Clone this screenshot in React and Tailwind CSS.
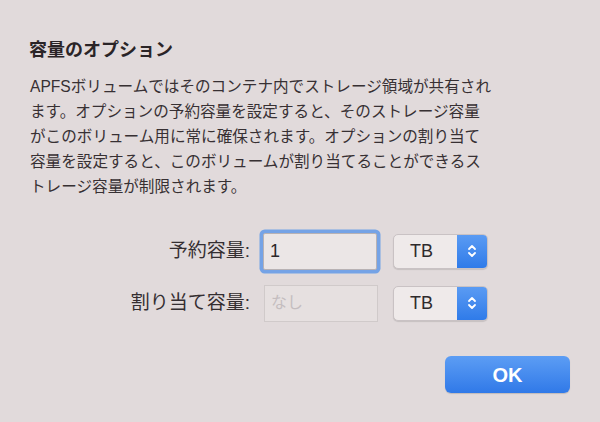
const Chevrons = () => (
    <svg width="10" height="16" viewBox="0 0 10 16" fill="none" stroke="white" strokeWidth="1.8" strokeLinecap="round" strokeLinejoin="round">
        <path d="M2 6 L5 3 L8 6" />
        <path d="M2 10 L5 13 L8 10" />
    </svg>
);

const UnitPopup = ({ value }) => (
    <div className="flex h-[35px] w-[95px] overflow-hidden rounded-[5px] border border-[#c9c2c4] bg-[#efeaea] shadow-[0_1px_1px_rgba(0,0,0,0.12)]">
        <div className="flex flex-1 items-center pl-[16px] text-[18px] text-[#2e2a2c]">{value}</div>
        <div className="flex w-[30px] items-center justify-center bg-gradient-to-b from-[#5a9bf3] to-[#2f7be9]">
            <Chevrons />
        </div>
    </div>
);

const lines = [
    "APFSボリュームではそのコンテナ内でストレージ領域が共有され",
    "ます。オプションの予約容量を設定すると、そのストレージ容量",
    "がこのボリューム用に常に確保されます。オプションの割り当て",
    "容量を設定すると、このボリュームが割り当てることができるス",
    "トレージ容量が制限されます。",
];

export default function App() {
    return (
        <div
            className="flex h-[422px] w-[600px] flex-col bg-[#e1dadb] pt-[37px]"
            style={{ fontFamily: '"Liberation Sans", "Noto Sans CJK JP", sans-serif' }}
        >
            <h1 className="pl-[29px] text-[18px] font-bold leading-[26px] text-[#2a2427]">
                容量のオプション
            </h1>
            <div className="mt-[11px] pl-[30px] text-[15.6px] leading-[25px] text-[#373033]">
                {lines.map((l, i) => (
                    <div key={i} className="whitespace-nowrap">{l}</div>
                ))}
            </div>

            <div className="mt-[29px] flex h-[46px] items-center">
                <div className="w-[250px] text-right text-[19px] text-[#342e31]">予約容量:</div>
                <div className="ml-[13px] flex h-[37px] w-[114px] items-center rounded-[2px] border border-[#b8b2b4] bg-[#ebe6e6] pl-[6px] text-[18px] text-[#2b2629] shadow-[0_0_0_3.5px_#75a3e6]">
                    1
                </div>
                <div className="ml-[16px]">
                    <UnitPopup value="TB" />
                </div>
            </div>

            <div className="mt-[6px] flex h-[46px] items-center">
                <div className="w-[250px] text-right text-[19px] text-[#342e31]">割り当て容量:</div>
                <div className="ml-[14px] flex h-[37px] w-[114px] items-center border border-[#d0caca] bg-[#e6e0e0] pl-[6px] text-[16px] text-[#c4bdbf]">
                    なし
                </div>
                <div className="ml-[15px]">
                    <UnitPopup value="TB" />
                </div>
            </div>

            <div className="mt-[30px] flex justify-end pr-[30px]">
                <button className="flex h-[37px] w-[125px] items-center justify-center rounded-[6px] bg-gradient-to-b from-[#5c9df4] to-[#3079e8] text-[20px] font-bold text-white shadow-[0_1px_1px_rgba(0,0,0,0.15)]">
                    OK
                </button>
            </div>
        </div>
    );
}
